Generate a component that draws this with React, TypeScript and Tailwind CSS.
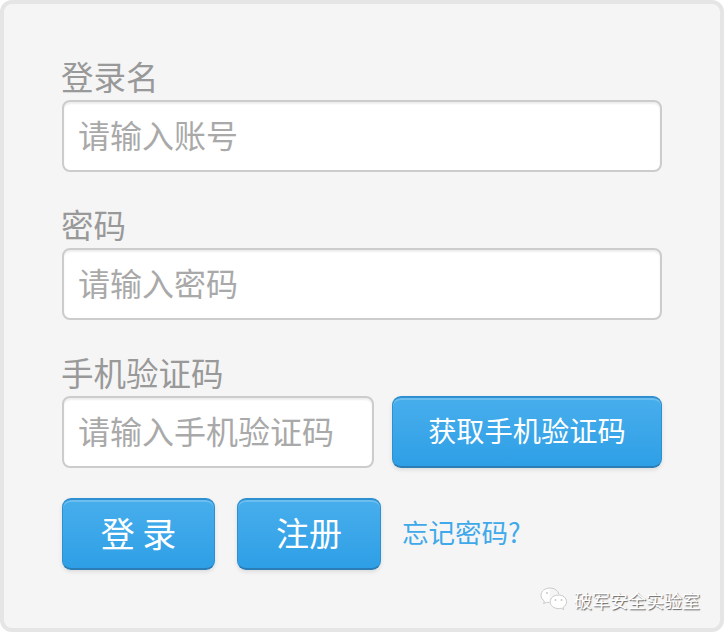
const font = "font-['Noto_Sans_CJK_SC','Noto_Sans',sans-serif]";

const inputClass =
  "block h-[72px] rounded-lg border-2 border-[#cccccc] bg-white pl-[14px] pr-[10px] pb-[4px] text-[32px] shadow-[inset_0_2px_2px_rgba(0,0,0,0.07)] outline-none placeholder:text-[#a9a9a9]";
const labelClass = "-ml-[1px] block h-[48px] text-[32.5px] leading-[47px] text-[#999999]";

const Field = ({ label, placeholder, mt }: { label: string; placeholder: string; mt: string }) => (
  <div className={mt}>
    <label className={labelClass}>{label}</label>
    <input placeholder={placeholder} className={`${inputClass} w-full`} />
  </div>
);

const BlueButton = ({ className, children }: { className: string; children: React.ReactNode }) => (
  <button className={`h-[72px] rounded-[9px] border border-t-2 border-b-2 border-[#2e90d0] border-b-[#2a7db5] bg-gradient-to-b from-[#47aeec] to-[#2e9fe6] pb-[3px] text-white shadow-[inset_0_2px_0_rgba(255,255,255,0.2),0_2px_4px_rgba(0,0,0,0.1)] ${className}`}>
    {children}
  </button>
);

const WechatIcon = () => (
  <svg width="28" height="25" viewBox="0 0 28 25" fill="#ffffff" stroke="#c9c9c9" strokeWidth="1">
    <path d="M10 1C5 1 1 4.2 1 8.300c0 2.400 1.300 4.400 3.400 5.800l-.8 2.600 3-1.500c.9.200 1.700.4 2.700.4" />
    <path d="M10 1c4.300 0 8 2.600 8.800 6" fill="none" />
    <path d="M18.500 8c-4.600 0-8.300 3-8.300 6.800s3.700 6.800 8.300 6.800c.9 0 1.800-.1 2.600-.4l2.600 1.500-.7-2.300c2.200-1.300 3.600-3.300 3.600-5.600C26.600 11 23 8 18.500 8z" />
    <circle cx="7" cy="6" r="1" fill="#c9c9c9" stroke="none" />
    <circle cx="15.500" cy="13" r="1" fill="#c9c9c9" stroke="none" />
    <circle cx="21.500" cy="13" r="1" fill="#c9c9c9" stroke="none" />
  </svg>
);

export default function App() {
  return (
    <div className={`${font} relative h-[632px] w-[724px] rounded-xl border-4 border-[#e5e5e5] bg-[#f5f5f5] px-[58px] pt-[48px]`}>
      <Field label="登录名" placeholder="请输入账号" mt="" />
      <Field label="密码" placeholder="请输入密码" mt="mt-[28px]" />
      <div className="mt-[28px]">
        <label className={labelClass}>手机验证码</label>
        <div className="flex gap-[18px]">
          <input placeholder="请输入手机验证码" className={`${inputClass} w-[312px]`} />
          <BlueButton className="w-[270px] text-[28.25px]">获取手机验证码</BlueButton>
        </div>
      </div>
      <div className="mt-[30px] flex items-center">
        <BlueButton className="w-[153px] text-[34px]">登 录</BlueButton>
        <BlueButton className="ml-[22px] w-[144px] text-[33px]">注册</BlueButton>
        <a className="ml-[21px] pb-[5px] text-[26.5px] text-[#3fa9ea]">忘记密码?</a>
      </div>
      <div className="absolute right-[20px] bottom-[16px] flex items-center gap-[6px]">
        <WechatIcon />
        <span className="text-[18px] leading-[24px] text-white [text-shadow:1px_1px_1px_rgba(0,0,0,0.6)]">破军安全实验室</span>
      </div>
    </div>
  );
}
